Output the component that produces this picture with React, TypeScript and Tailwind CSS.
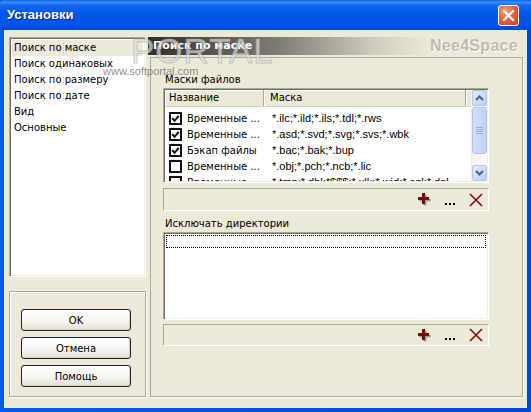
import React from "react";

const sunken =
  "border border-t-[#ACA899] border-l-[#ACA899] border-b-white border-r-white shadow-[inset_1px_1px_0_#716F64,inset_-1px_-1px_0_#F1EFE2]";

function CloseBtn() {
  return (
    <div className="w-[21px] h-[21px] rounded-[3px] border border-white flex items-center justify-center bg-[radial-gradient(circle_at_35%_30%,#F2A38A_0%,#E2643F_45%,#C8421E_100%)]">
      <svg width="13" height="13" viewBox="0 0 13 13">
        <path d="M2 2 L11 11 M11 2 L2 11" stroke="#fff" strokeWidth="2.2" strokeLinecap="square" />
      </svg>
    </div>
  );
}

function Check({ on }: { on: boolean }) {
  return (
    <svg width="13" height="13" viewBox="0 0 13 13" className="shrink-0">
      <rect x="1" y="1" width="11" height="11" fill="#fff" stroke="#111" strokeWidth="2" />
      {on && <path d="M3.2 6.2 L5.6 8.8 L9.8 3.8" stroke="#111" strokeWidth="2" fill="none" />}
    </svg>
  );
}

function PlusIcon() {
  return (
    <svg width="13" height="13" viewBox="0 0 13 13">
      <path d="M4 0 H7 V4 H11 V7 H7 V11 H4 V7 H0 V4 H4 Z" fill="#9A9A9A" transform="translate(1.5,1.5)" />
      <path d="M4 0 H7 V4 H11 V7 H7 V11 H4 V7 H0 V4 H4 Z" fill="#7A0A0A" />
    </svg>
  );
}

function XIcon() {
  return (
    <svg width="14" height="14" viewBox="0 0 14 14">
      <path d="M1 1 L13 13 M13 1 L1 13" stroke="#8B1010" strokeWidth="1.7" />
    </svg>
  );
}

function Dots() {
  return (
    <div className="flex gap-[2px] self-end mb-[5px]">
      <div className="w-[2px] h-[2px] bg-black" />
      <div className="w-[2px] h-[2px] bg-black" />
      <div className="w-[2px] h-[2px] bg-black" />
    </div>
  );
}

function Toolbar({ h }: { h: string }) {
  return (
    <div
      className={`w-[326px] ${h} border border-t-[#ACA899] border-l-[#ACA899] border-b-white border-r-white flex items-center justify-end pr-[5px] gap-[14px]`}
    >
      <PlusIcon />
      <Dots />
      <XIcon />
    </div>
  );
}

function Arrow({ up }: { up: boolean }) {
  return (
    <div className="w-[15px] h-[16px] rounded-[2px] border border-[#B3C6F2] bg-[linear-gradient(to_bottom_right,#E3EBFE,#BCCFF8)] flex items-center justify-center">
      <svg width="9" height="6" viewBox="0 0 9 6">
        <path d={up ? "M1 5 L4.5 1.5 L8 5" : "M1 1 L4.5 4.5 L8 1"} stroke="#4D6185" strokeWidth="2" fill="none" />
      </svg>
    </div>
  );
}

function Scrollbar() {
  return (
    <div className="w-[16px] h-full flex flex-col items-center bg-[linear-gradient(to_right,#F3F1EA,#FDFDFA)]">
      <Arrow up />
      <div className="w-[15px] h-[47px] mt-[1px] rounded-[3px] border border-[#AFC3EF] bg-[linear-gradient(to_right,#D3E0FD,#BFD1F9)] flex flex-col items-center justify-center gap-[1px]">
        <div className="w-[7px] h-[1px] bg-[#8FAEF3]" />
        <div className="w-[7px] h-[1px] bg-[#8FAEF3]" />
        <div className="w-[7px] h-[1px] bg-[#8FAEF3]" />
        <div className="w-[7px] h-[1px] bg-[#8FAEF3]" />
      </div>
      <div className="flex-1" />
      <Arrow up={false} />
    </div>
  );
}

const rows: [boolean, string, string][] = [
  [true, "Временные ...", "*.ilc;*.ild;*.ils;*.tdl;*.rws"],
  [true, "Временные ...", "*.asd;*.svd;*.svg;*.svs;*.wbk"],
  [true, "Бэкап файлы", "*.bac;*.bak;*.bup"],
  [false, "Временные ...", "*.obj;*.pch;*.ncb;*.lic"],
  [false, "Временные ...", "*.tmp;*.dbl;*$$$;*.xlk;*.wid;*.sql;*.dnl"],
];

function Btn({ label }: { label: string }) {
  return (
    <div className="w-[110px] h-[22px] rounded-[3px] border border-[#1E2630] bg-[linear-gradient(to_bottom,#FFFFFF_0%,#F4F3EE_60%,#E3E0D4_100%)] shadow-[inset_-1px_-1px_0_#D6D0C0] flex items-center justify-center">
      {label}
    </div>
  );
}

export default function App() {
  return (
    <div className="w-[531px] h-[412px] overflow-hidden relative font-['DejaVu_Sans',sans-serif] text-[10px] text-black bg-[#0A4FD8]">
      {/* title bar */}
      <div className="h-[30px] flex items-center pl-[7px] pr-[12px] rounded-t-[3px] bg-[linear-gradient(to_bottom,#0A62E6_0%,#3D8DF8_7%,#1468F0_18%,#0058E8_45%,#0054E3_85%,#0048CF_100%)]">
        <span className="flex-1 text-white font-bold text-[13px] font-['Liberation_Sans',sans-serif] [text-shadow:1px_1px_0_#0A2A8A]">
          Установки
        </span>
        <CloseBtn />
      </div>

      {/* frame */}
      <div className="h-[382px] px-[4px] pb-[4px] bg-[linear-gradient(to_right,#0A5AE8,#0048D8)]">
        <div className="h-[378px] bg-[#ECE9D8] flex pt-[7px] pl-[5px] pr-[4px] pb-[11px] gap-[2px]">
          {/* left column */}
          <div className="w-[137px] flex flex-col gap-[14px]">
            <div className={`h-[240px] bg-white ${sunken} p-[2px] flex flex-col`}>
              {["Поиск по маске", "Поиск одинаковых", "Поиск по размеру", "Поиск по дате", "Вид", "Основные"].map(
                (t, i) => (
                  <div
                    key={t}
                    className={`h-[16px] leading-[16px] pl-[2px] whitespace-nowrap ${i === 0 ? "bg-[#ECE9D8]" : ""}`}
                  >
                    {t}
                  </div>
                )
              )}
            </div>
            <div className="h-[106px] border border-[#ACA899] shadow-[inset_1px_1px_0_#fff,1px_1px_0_#fff] flex flex-col pt-[17px] pl-[11px] gap-[6px]">
              <Btn label="OK" />
              <Btn label="Отмена" />
              <Btn label="Помощь" />
            </div>
          </div>

          {/* right column */}
          <div className="w-[375px] flex flex-col">
            <div className="h-[18px] flex items-center justify-between pl-[5px] pr-[5px] bg-[linear-gradient(to_right,#2E2E2E_0%,#7E7D75_35%,#CFCCBD_60%,#ECE9D8_75%)]">
              <span className="text-white font-bold text-[11px]">Поиск по маске</span>
              <span className="font-bold text-[16px] font-['Liberation_Sans',sans-serif] text-[#BEBBAE] [text-shadow:1px_1px_0_#fff] tracking-[0.3px]">
                Nee4Space
              </span>
            </div>
            <div className="mt-[2px] ml-[2px] h-[340px] border border-[#ACA899] shadow-[1px_1px_0_#fff] flex flex-col pl-[12px] pt-[15px]">
              <div className="h-[14px] leading-[14px] pl-[2px]">Маски файлов</div>
              <div className={`mt-[1px] w-[326px] h-[95px] bg-white ${sunken} p-[1px] flex overflow-hidden`}>
                <div className="flex-1 flex flex-col overflow-hidden">
                  <div className="h-[17px] flex bg-[#EBE8D7] border-b border-[#D6D2C2] shrink-0">
                    <div className="w-[99px] pl-[4px] leading-[16px] border-r border-r-[#ACA899] shadow-[inset_1px_1px_0_#fff]">
                      Название
                    </div>
                    <div className="w-[202px] pl-[6px] leading-[16px] border-r border-r-[#ACA899] shadow-[inset_1px_1px_0_#fff]">
                      Маска
                    </div>
                    <div className="flex-1 shadow-[inset_1px_1px_0_#fff]" />
                  </div>
                  <div className="pt-[3px] flex flex-col">
                    {rows.map(([on, n, m], i) => (
                      <div key={i} className="h-[16px] flex items-center shrink-0 whitespace-nowrap">
                        <div className="w-[99px] flex items-center pl-[4px] gap-[5px]">
                          <Check on={on} />
                          <span>{n}</span>
                        </div>
                        <div className="pl-[8px] font-['Liberation_Sans',sans-serif] text-[11px]">{m}</div>
                      </div>
                    ))}
                  </div>
                </div>
                <Scrollbar />
              </div>
              <div className="mt-[5px]">
                <Toolbar h="h-[23px]" />
              </div>
              <div className="mt-[6px] h-[14px] leading-[14px] pl-[2px]">Исключать директории</div>
              <div className={`mt-[1px] w-[326px] h-[88px] bg-white ${sunken} p-[2px]`}>
                <div className="h-[13px] border border-dotted border-black" />
              </div>
              <div className="mt-[4px]">
                <Toolbar h="h-[22px]" />
              </div>
            </div>
          </div>
        </div>
      </div>

      {/* watermark overlay */}
      <div className="absolute left-[131px] top-[33px] pointer-events-none font-['Liberation_Sans',sans-serif] text-[35px] leading-[35px] tracking-[1px] text-[rgba(225,225,225,0.7)] [-webkit-text-stroke:1px_rgba(160,160,160,0.5)]">
        PORTAL
      </div>
      <div className="absolute left-[103px] top-[65px] pointer-events-none font-['Liberation_Sans',sans-serif] text-[11px] leading-[12px] text-[rgba(120,120,120,0.85)]">
        www.softportal.com
      </div>
    </div>
  );
}
